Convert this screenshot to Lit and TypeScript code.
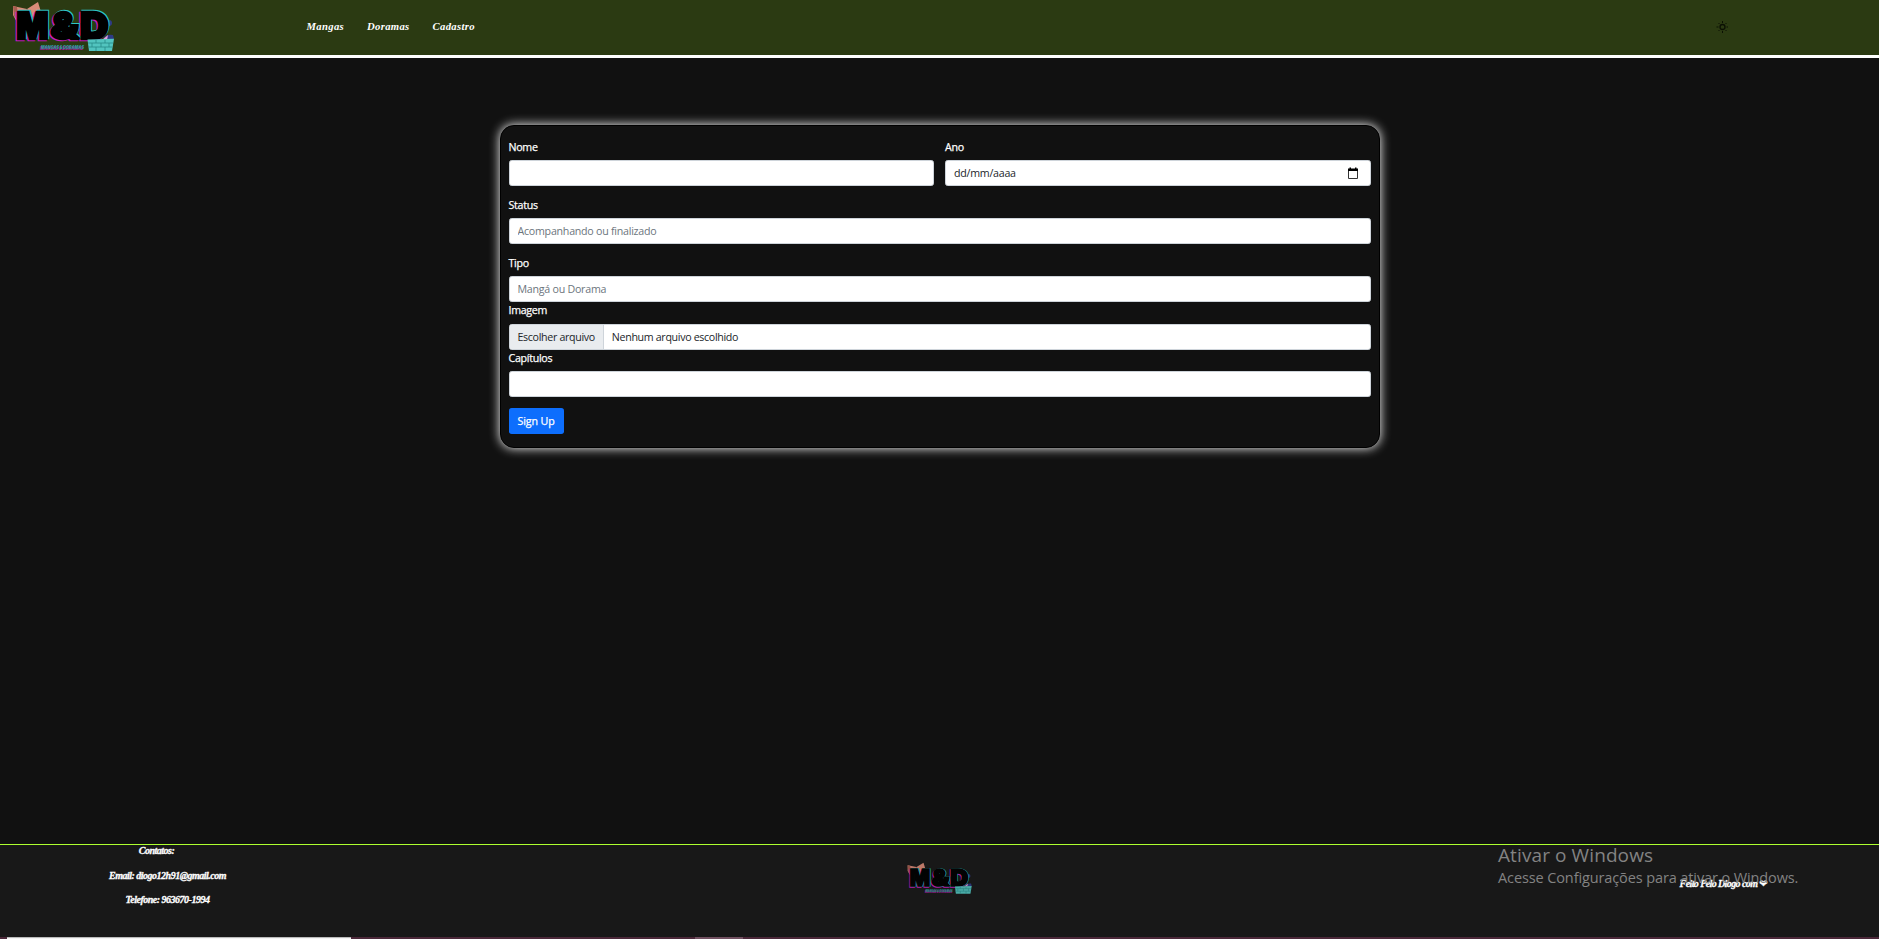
import { LitElement, html, css, svg } from "lit";
import { customElement, property } from "lit/decorators.js";

@customElement("md-logo")
class MdLogo extends LitElement {
  static styles = css`
    :host { display: block; }
    svg { display: block; width: 100%; height: 100%; }
    .face { font: 900 37px Inter, "Liberation Sans", sans-serif; stroke-width: 2.6; stroke-linejoin: miter; stroke-miterlimit: 2; }
    .pink { fill: #c81cc0; stroke: #c81cc0; }
    .cyan { fill: #2fc4c4; stroke: #2fc4c4; }
    .ink { fill: #000; stroke: #000; }
    .sub { font: italic 900 5px Inter, "Liberation Sans", sans-serif; }
    .sub-pink { fill: #a3219c; }
    .sub-cyan { fill: #2a9494; }
  `;
  private letters(cls: string, dx: number, dy: number) {
    return svg`<g class="face ${cls}" transform="translate(${dx} ${dy})">
      <text x="16.500" y="39.300" textLength="32" lengthAdjust="spacingAndGlyphs">M</text>
      <text x="50.500" y="39.300" textLength="28.500" lengthAdjust="spacingAndGlyphs">&amp;</text>
      <text x="80" y="39.300" textLength="28.500" lengthAdjust="spacingAndGlyphs">D</text>
    </g>`;
  }
  render() {
    return html`<svg viewBox="12 1 104 52" aria-label="M&D">
      <path d="M13 6l14 3 11-7 3 10-5 10-18 2-5-9z" fill="#d98b78" />
      <path d="M13 6l4 1 2 15-5-6z" fill="#a85d50" />
      <path d="M27 9l2 12" stroke="#a85d50" />
      <circle cx="109" cy="23" r="3" fill="#2e3b85" />
      <path d="M103 40q2-6 10-5l1 4-4 4z" fill="#2e3b85" />
      ${this.letters("pink", -1.2, 0.9)} ${this.letters("cyan", 1.1, -0.8)} ${this.letters("ink", 0, 0)}
      <path d="M102 40l6-5-1 5z" fill="#e0a0d8" />
      <path d="M87.500 39.500l26.500-0.800-2 12.300-23 0z" fill="#52c4bf" />
      <path d="M88 43h25M88 47h24M96 40v3M105 40v3M92 43v4M101 43v4M109 43v4M96 47v4M105 47v4" stroke="#278b88" stroke-width=".8" />
      <text class="sub sub-pink" x="40" y="49.800" textLength="43" lengthAdjust="spacingAndGlyphs">MANGAS &amp; DORAMAS</text>
      <text class="sub sub-cyan" x="41" y="49" textLength="43" lengthAdjust="spacingAndGlyphs" aria-hidden="true">MANGAS &amp; DORAMAS</text>
    </svg>`;
  }
}

@customElement("form-field")
class FormField extends LitElement {
  @property() label = "";
  @property() placeholder = "";
  @property() kind = "text";
  static styles = css`
    :host { display: flex; flex-direction: column; gap: 5px; font: 10.67px/16px "Open Sans", "Noto Sans", sans-serif; letter-spacing: -0.25px; }
    .label { color: #fff; height: 16px; letter-spacing: -0.3px; -webkit-text-stroke: .25px #fff; }
    .control { box-sizing: border-box; width: 100%; height: 26px; margin: 0; border: 1px solid #ced4da; border-radius: 2.67px;
      background: #fff; color: #212529; padding: 0 8px; font: inherit; letter-spacing: inherit; display: flex; align-items: center; outline: 0; }
    .control::placeholder { color: #6c757d; opacity: 1; }
    .date { justify-content: space-between; padding-right: 11px; }
    .date svg { width: 12px; height: 13px; display: block; }
    .file { padding: 0; overflow: hidden; letter-spacing: -0.33px; }
    .pick { background: #e9ecef; height: 24px; line-height: 24px; padding: 0 8px; border-right: 1px solid #ced4da; }
    .none { padding-left: 8px; }
  `;
  private control() {
    if (this.kind === "date")
      return html`<div class="control date"><span>dd/mm/aaaa</span>
        <svg viewBox="0 0 12 13"><path d="M1.500 3v8.500h9V3" fill="none" stroke="#333" /><path d="M1 1.500h1.500V.5H4v1h4v-1h1.500v1H11V4H1z" fill="#000" /></svg></div>`;
    if (this.kind === "file")
      return html`<div class="control file"><span class="pick">Escolher arquivo</span><span class="none">Nenhum arquivo escolhido</span></div>`;
    return html`<input class="control" placeholder=${this.placeholder} />`;
  }
  render() {
    return html`<label class="label">${this.label}</label>${this.control()}`;
  }
}

@customElement("app-root")
class AppRoot extends LitElement {
  static styles = css`
    :host { display: flex; flex-direction: column; position: relative; height: 939px; background: #111; overflow: hidden; }
    .header { box-sizing: border-box; height: 58px; flex: none; background: #2b3a12; border-bottom: 3px solid #fff; display: flex; align-items: flex-start; padding-left: 12px; }
    .logo { width: 104px; height: 52px; margin-top: 1px; }
    .nav { display: flex; gap: 23px; margin-left: 190.500px; padding-top: 18px; flex: 1; }
    .link { color: #fff; font: italic bold 10.67px/16px "Liberation Serif", serif; letter-spacing: .33px; }
    .sun { width: 12px; height: 12px; margin: 21px 151px 0 0; }
    .main { flex: 1; display: flex; justify-content: center; align-items: flex-start; padding-top: 67px; }
    .card { box-sizing: border-box; width: 880px; height: 323px; border: 1px solid #000; border-radius: 14px; background: #111;
      box-shadow: 0 0 11px 0 #fff; padding: 13px 8px 0; display: flex; flex-direction: column; }
    .row { display: grid; grid-template-columns: 1fr 1fr; gap: 11px; margin-bottom: 11px; }
    .spaced { margin-bottom: 11px; }
    .image { gap: 6px; }
    .button { align-self: flex-start; box-sizing: border-box; height: 26px; width: 55px; margin-top: 11px; border: 0; border-radius: 2.67px; background: #0d6efd; color: #fff; padding: 0;
      font: 10.67px/16px "Open Sans", "Noto Sans", sans-serif; letter-spacing: -.1px; -webkit-text-stroke: .25px #fff; }
    .footer { box-sizing: border-box; height: 93px; flex: none; border-top: 1px solid #adff2f; background: #181818; display: grid; grid-template-columns: 335px 1fr 335px; }
    .contacts { display: flex; flex-direction: column; align-items: center; gap: 8.5px; margin-top: -2px; }
    .note { color: #fff; font: italic bold 10px/16px "Liberation Serif", serif; letter-spacing: -.5px; -webkit-text-stroke: .3px #fff; white-space: nowrap; }
    .first { margin-right: 22px; }
    .small-logo { width: 66px; height: 33px; justify-self: center; margin-top: 17px; opacity: .85; }
    .credit { justify-self: end; margin: 31px 112px 0 0; letter-spacing: -.6px; }
    .heart { font: normal 10px/10px "DejaVu Sans", sans-serif; }
    .watermark { position: absolute; left: 1498px; top: 843px; color: #838383; font-family: "Open Sans", "Noto Sans", sans-serif; white-space: nowrap; }
    .wm-title { font-size: 19px; line-height: 25px; letter-spacing: .1px; }
    .wm-text { font-size: 14.500px; line-height: 20px; letter-spacing: -.11px; }
    .strip { height: 2px; flex: none; display: grid; grid-template-columns: 7px 344px 344px 48px 1fr; background: #4b2839; }
    .active { background: #f4f4f4; grid-column: 2; border-top: 1px solid #bbb; box-sizing: border-box; }
    .lit { background: #715060; grid-column: 4; }
  `;
  render() {
    return html`
      <header class="header">
        <md-logo class="logo"></md-logo>
        <nav class="nav"><a class="link">Mangas</a><a class="link">Doramas</a><a class="link">Cadastro</a></nav>
        <svg class="sun" viewBox="0 0 12 12" fill="none" stroke="#0b1003"><circle cx="6.500" cy="6" r="2.500" stroke-width="1.300" /><path d="M6.500 0v2M6.500 10v2M.5 6h2M10.500 6h2M2.500 2l1 1M9.500 9l1 1M2.500 10l1-1M9.500 3l1-1" /></svg>
      </header>
      <main class="main">
        <form class="card">
          <div class="row"><form-field label="Nome"></form-field><form-field label="Ano" kind="date"></form-field></div>
          <form-field class="spaced" label="Status" placeholder="Acompanhando ou finalizado"></form-field>
          <form-field label="Tipo" placeholder="Mangá ou Dorama"></form-field>
          <form-field class="image" label="Imagem" kind="file"></form-field>
          <form-field label="Capítulos"></form-field>
          <button class="button" type="button">Sign Up</button>
        </form>
      </main>
      <footer class="footer">
        <div class="contacts"><span class="note first">Contatos:</span><span class="note">Email: diogo12h91@gmail.com</span><span class="note">Telefone: 963670-1994</span></div>
        <md-logo class="small-logo"></md-logo>
        <span class="note credit">Feito Pelo Diogo com <span class="heart">❤</span></span>
      </footer>
      <div class="strip"><span class="active"></span><span class="lit"></span></div>
      <div class="watermark"><div class="wm-title">Ativar o Windows</div><div class="wm-text">Acesse Configurações para ativar o Windows.</div></div>
    `;
  }
}
